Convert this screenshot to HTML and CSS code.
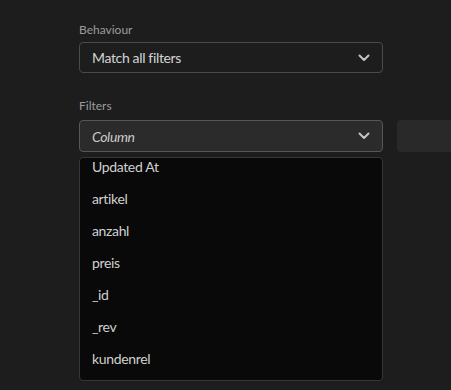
FILE: index.html
```html
<!DOCTYPE html>
<html>
<head>
<meta charset="utf-8">
<link rel="stylesheet" href="styles.css">
</head>
<body>
<div class="panel">
  <div class="field">
    <div class="label">Behaviour</div>
    <div class="select">
      <span class="value">Match all filters</span>
      <svg class="chev" width="12" height="8" viewBox="0 0 12 8"><path d="M1.5 1.5 L6 6 L10.5 1.5" fill="none" stroke="#c4c4c4" stroke-width="2" stroke-linecap="round" stroke-linejoin="round"/></svg>
    </div>
  </div>
  <div class="field filters">
    <div class="label">Filters</div>
    <div class="row">
      <div class="select column">
        <span class="value placeholder">Column</span>
        <svg class="chev" width="12" height="8" viewBox="0 0 12 8"><path d="M1.5 1.5 L6 6 L10.5 1.5" fill="none" stroke="#c4c4c4" stroke-width="2" stroke-linecap="round" stroke-linejoin="round"/></svg>
      </div>
      <div class="ghost"></div>
    </div>
    <div class="dropdown">
      <ul class="list">
        <li>Updated At</li>
        <li>artikel</li>
        <li>anzahl</li>
        <li>preis</li>
        <li>_id</li>
        <li>_rev</li>
        <li>kundenrel</li>
      </ul>
    </div>
  </div>
</div>
</body>
</html>
```
FILE: styles.css
```css
html, body {
  margin: 0;
  padding: 0;
  background: #1d1d1d;
  height: 100%;
  overflow: hidden;
}
body {
  font-family: "Lato", "Noto Sans", sans-serif;
  color: #cfcfcf;
}
.panel {
  padding: 22px 0 0 79px;
}
.label {
  font-size: 12px;
  color: #9c9c9c;
  line-height: 15px;
  margin-bottom: 5px;
}
.select {
  box-sizing: border-box;
  width: 304px;
  height: 31px;
  border: 1px solid #4a4a4a;
  border-radius: 4px;
  background: #1d1d1d;
  display: flex;
  align-items: center;
  justify-content: space-between;
  padding: 0 12px 0 12px;
  font-size: 14px;
  letter-spacing: -0.35px;
}
.value { color: #d4d4d4; }
.placeholder { font-style: italic; color: #cacaca; }
.chev { display: block; }
.filters { margin-top: 25px; }
.filters .label { margin-bottom: 7px; }
.row {
  display: flex;
  gap: 14px;
}
.select.column {
  height: 32px;
  background: #2b2b2b;
  border-color: #575757;
}
.ghost {
  flex: 1;
  height: 32px;
  background: #292929;
  border-radius: 4px 0 0 4px;
}
.dropdown {
  box-sizing: border-box;
  margin-top: 5px;
  width: 304px;
  height: 224px;
  background: #090909;
  border: 1px solid #363636;
  border-radius: 4px;
  overflow: hidden;
}
.list {
  list-style: none;
  margin: -7px 0 0 0;
  padding: 0;
}
.list li {
  height: 32px;
  line-height: 32px;
  padding-left: 12px;
  font-size: 14px;
  letter-spacing: -0.35px;
  color: #d0d0d0;
}
```
